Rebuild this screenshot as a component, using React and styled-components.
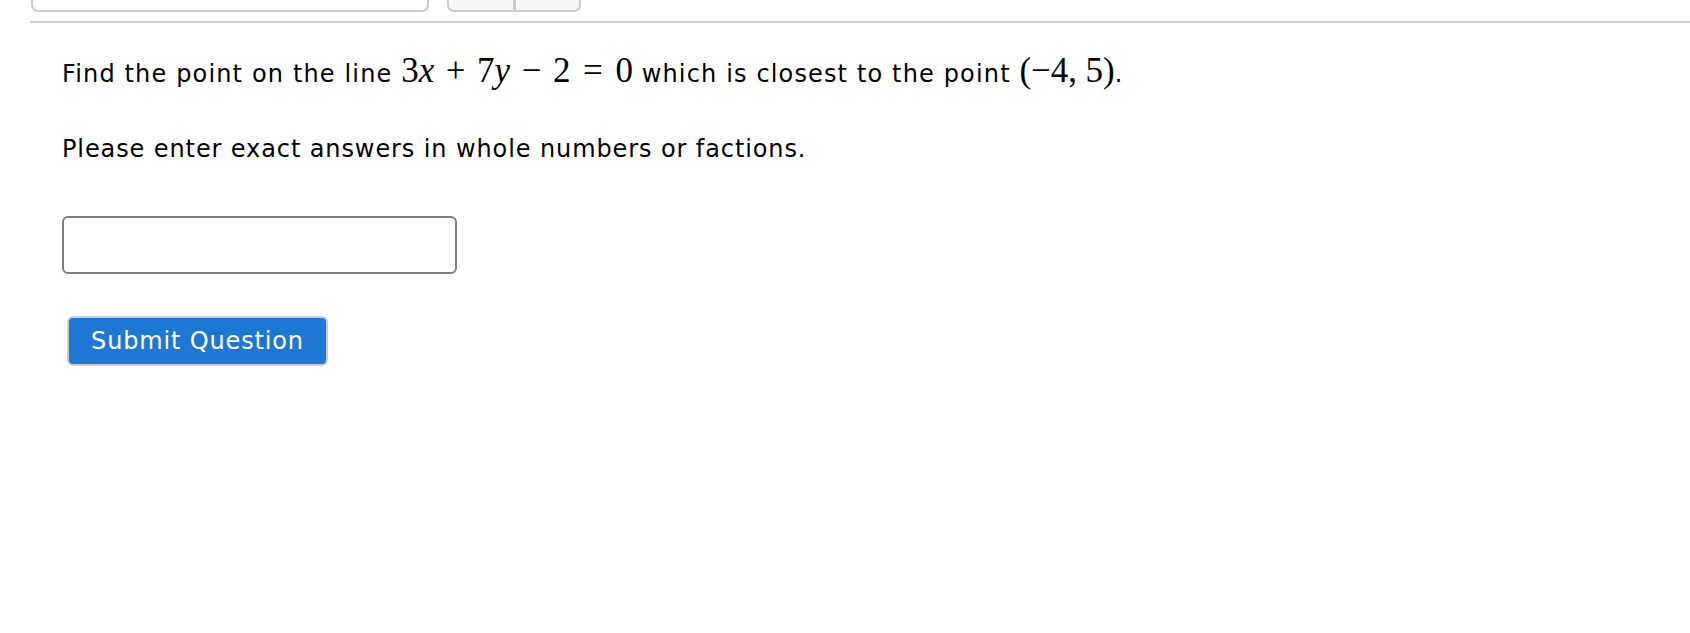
import styled, { createGlobalStyle } from "styled-components";

const GlobalStyle = createGlobalStyle`
	body {
		margin: 0;
		background: #fff;
		font-family: "DejaVu Sans", Verdana, sans-serif;
		color: #000;
	}
`;

const Page = styled.div``;

const TopBar = styled.div`
	display: flex;
	gap: 18px;
	padding-left: 31px;
	height: 12px;
`;

const Tab = styled.div`
	box-sizing: border-box;
	width: ${(p) => p.width}px;
	height: 12px;
	border: 2px solid #cccccc;
	border-top: none;
	border-radius: 0 0 7px 7px;
	background: ${(p) => (p.shaded ? "#f7f7f7" : "#fff")};
	display: flex;
	overflow: hidden;
`;

const TabHalf = styled.div`
	flex: 1;
	& + & {
		border-left: 3px solid #cccccc;
	}
`;

const Rule = styled.div`
	height: 2px;
	background: #cccccc;
	margin: 9px 0 0 30px;
`;

const Content = styled.div`
	padding-left: 62px;
`;

const Text = styled.p`
	margin: ${(p) => p.top}px 0 0;
	font-size: 24px;
	letter-spacing: ${(p) => p.spacing || 0.9}px;
	line-height: 36px;
	height: 36px;
	white-space: nowrap;
`;

const Math = styled.span`
	font-family: "Liberation Serif", "DejaVu Serif", serif;
	font-size: 35px;
	letter-spacing: 0;
	line-height: 1;
`;

const Var = styled.i`
	font-style: italic;
`;

const Bin = styled.span`
	margin: 0 ${(p) => p.space}em;
`;

const AnswerInput = styled.input`
	display: block;
	box-sizing: border-box;
	margin: 49px 0 0;
	width: 395px;
	height: 58px;
	border: 2px solid #7f7f7f;
	border-radius: 6px;
	font-size: 24px;
	padding: 0 10px;
	outline: none;
`;

const SubmitButton = styled.button`
	display: block;
	box-sizing: border-box;
	margin: 42px 0 0 5px;
	width: 261px;
	height: 50px;
	background: #1f77d4;
	border: 2px solid #cdcdcd;
	border-radius: 6px;
	color: #fff;
	font-family: "DejaVu Sans", Verdana, sans-serif;
	font-size: 24px;
	letter-spacing: 0.85px;
	padding: 0;
`;

const App = () => {
	return (
		<Page>
			<GlobalStyle />
			<TopBar>
				<Tab width={398} />
				<Tab width={134} shaded>
					<TabHalf />
					<TabHalf />
				</Tab>
			</TopBar>
			<Rule />
			<Content>
				<Text top={30} spacing={1.15}>
					Find the point on the line{" "}
					<Math>
						3<Var>x</Var>
						<Bin space={0.33}>+</Bin>7<Var>y</Var>
						<Bin space={0.33}>−</Bin>2<Bin space={0.36}>=</Bin>0
					</Math>{" "}
					which is closest to the point{" "}
					<Math>
						(−4,<Bin space={0.12}></Bin>5)
					</Math>
					.
				</Text>
				<Text top={42}>
					Please enter exact answers in whole numbers or factions.
				</Text>
				<AnswerInput type="text" />
				<SubmitButton>Submit Question</SubmitButton>
			</Content>
		</Page>
	);
};

export default App;
